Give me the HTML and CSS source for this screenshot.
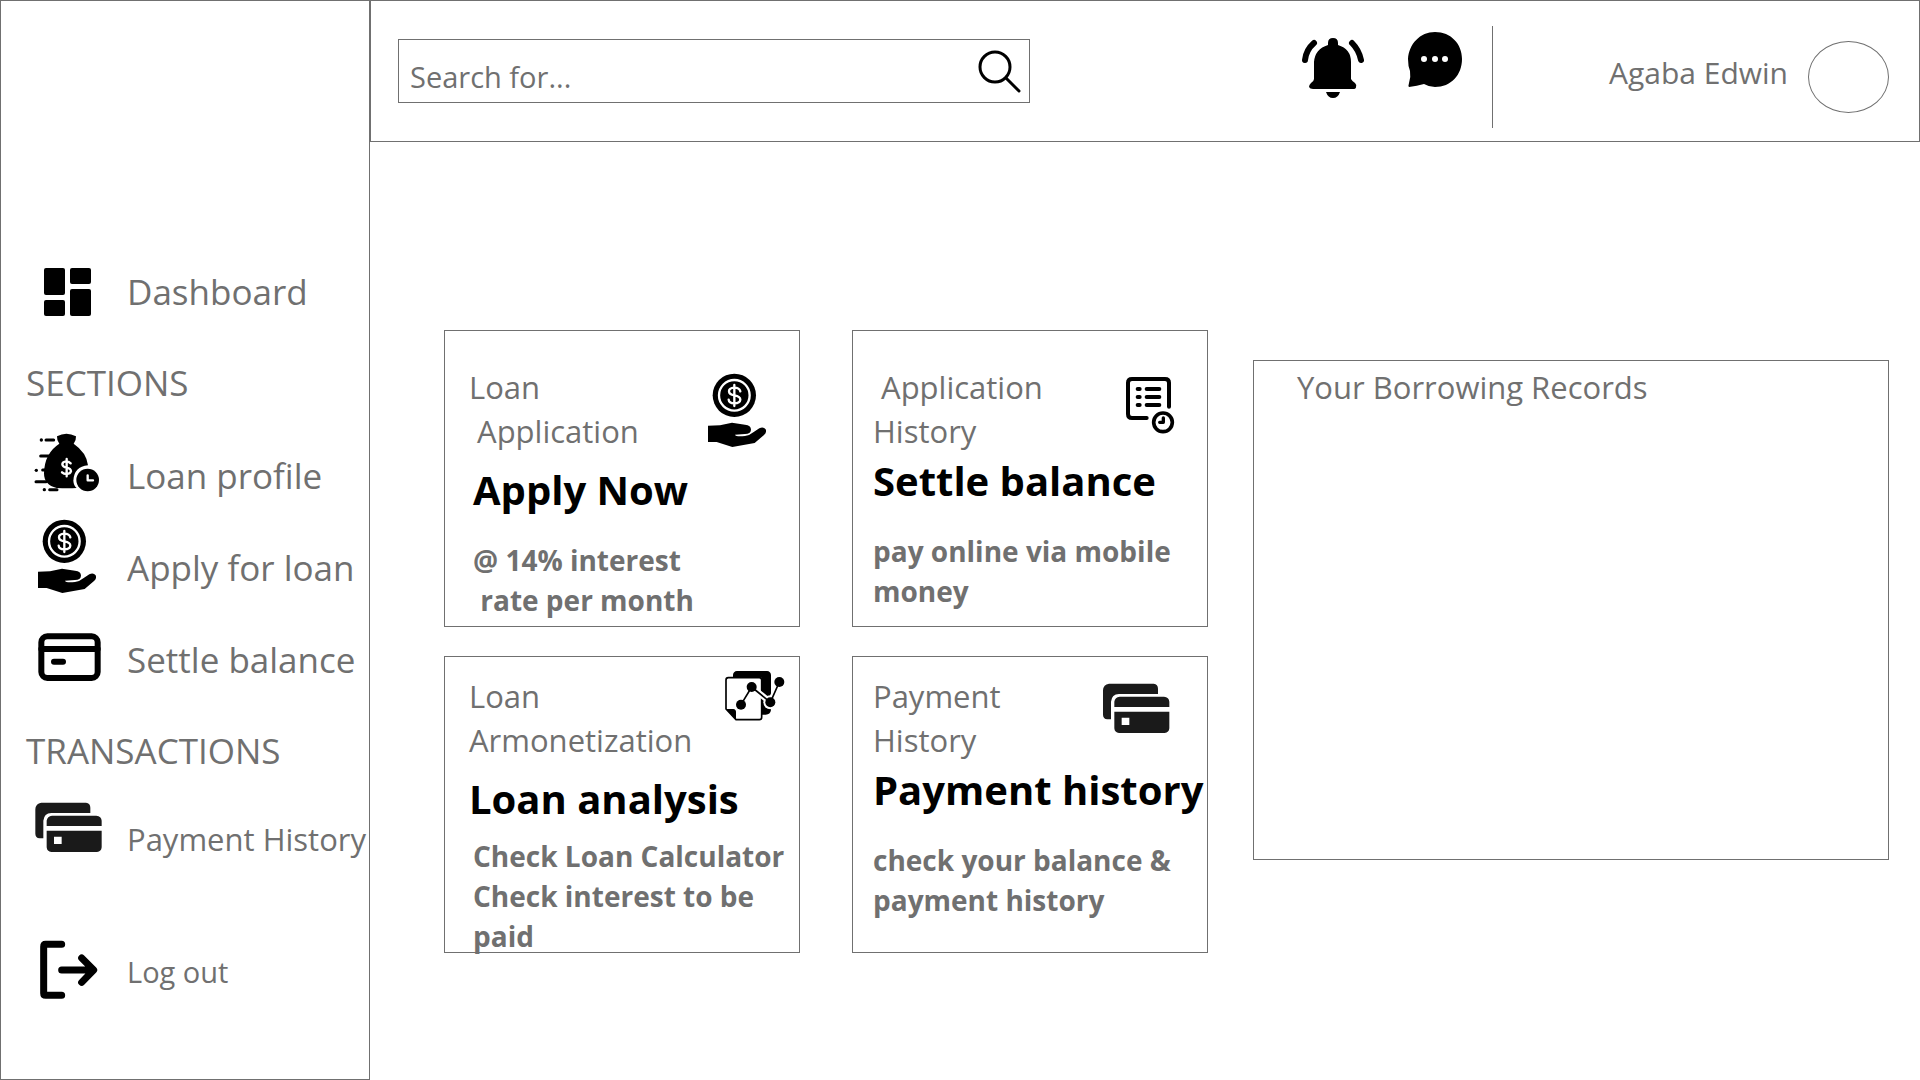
FILE: index.html
```
<!DOCTYPE html>
<html lang="en">
<head>
<meta charset="utf-8">
<title>Loan dashboard</title>
<link rel="stylesheet" href="styles.css">
</head>
<body>
<div class="app">
  <nav class="sidebar" aria-label="Main">
    <a class="nav-item" href="#dashboard">
      <svg class="nav-icon" viewBox="0 0 92 92" aria-hidden="true"><rect x="20" y="23" width="21" height="27" rx="2"/><rect x="20" y="55" width="21" height="16" rx="2"/><rect x="46" y="23" width="21" height="16" rx="2"/><rect x="46" y="44" width="21" height="27" rx="2"/></svg>
      <span>Dashboard</span>
    </a>
    <h2 class="nav-heading">SECTIONS</h2>
    <a class="nav-item" href="#profile">
      <svg class="nav-icon" viewBox="72 567 276 276" aria-hidden="true">
        <path d="M171 589Q199 573 228 589Q229 600 221 611Q260 638 264 676Q222 680 220 722Q221 737 230 744Q205 746 170 744Q132 735 132 700Q133 640 178 611Q170 600 171 589Z"/>
        <circle cx="263" cy="720" r="34"/>
        <path class="line line-white" stroke-width="7" d="M263 706V721H279"/>
        <path class="line line-white" stroke-width="7" d="M212 670Q206 664 199 664Q187 665 187 673Q188 681 200 683Q213 686 213 694Q211 702 200 702Q191 702 186 697M200 657V709"/>
        <path class="line" stroke-width="9" d="M138 600H161M122 648H150M128 690H140M108 725H138M149 749H171"/>
        <g><circle cx="124" cy="600" r="5"/><circle cx="109" cy="691" r="5"/><circle cx="133" cy="749" r="5"/></g>
      </svg>
      <span>Loan profile</span>
    </a>
    <a class="nav-item" href="#apply">
      <svg class="nav-icon" viewBox="72 63 276 276" aria-hidden="true">
        <g id="coin-hand">
          <circle cx="193" cy="124" r="65"/>
          <circle class="line line-white" cx="193" cy="124" r="46" stroke-width="7"/>
          <path class="line line-white" stroke-width="7" d="M211 112Q208 101 193 101Q177 102 177 112Q177 122 193 124Q211 127 211 137Q210 148 193 148Q177 148 176 137M193 93V156"/>
          <path d="M114 215L150 214L186 206L225 212Q243 214 243 227Q242 240 225 240L195 242Q197 249 225 246Q240 244 250 235L268 223Q280 217 287 226Q291 236 282 243L254 267L187 279L140 264H114Z"/>
        </g>
      </svg>
      <span>Apply for loan</span>
    </a>
    <a class="nav-item" href="#settle">
      <svg class="nav-icon" viewBox="72 339 276 276" aria-hidden="true"><rect class="line" x="124" y="409" width="169" height="125" rx="18" stroke-width="18"/><path class="line" stroke-width="18" d="M124 447H293M162 485H189"/></svg>
      <span>Settle balance</span>
    </a>
    <h2 class="nav-heading">TRANSACTIONS</h2>
    <a class="nav-item nav-item-compact" href="#payments">
      <svg class="nav-icon" viewBox="72 99 276 276" aria-hidden="true">
        <g id="card-stack" fill="#1a1a1a">
          <path d="M124 128H258Q271 130 271 143V159H154Q132 160 130 182V235H119Q106 233 106 221V148Q107 130 124 128Z"/>
          <path d="M140 198V182Q142 168 156 167H289Q304 168 305 182V198Z"/>
          <path fill-rule="evenodd" d="M140 212H305V262Q304 275 291 276H154Q141 275 140 262ZM162 230V252H185V230Z"/>
        </g>
      </svg>
      <span>Payment History</span>
    </a>
    <a class="nav-item nav-item-logout" href="#logout">
      <svg class="nav-icon" viewBox="72 495 276 276" aria-hidden="true"><path class="line" stroke-width="21" d="M185 553H137Q131 553 131 560V700Q131 706 137 706H185M185 630H279M245 594L281 630L245 667"/></svg>
      <span>Log out</span>
    </a>
  </nav>

  <div class="page">
    <header class="topbar">
      <form class="search" role="search">
        <input class="search-input" type="text" placeholder="Search for..." aria-label="Search for">
        <button class="icon-button search-button" type="button" aria-label="Search">
          <svg width="44" height="44" viewBox="0 0 44 44"><circle class="line" cx="18" cy="18" r="15" stroke-width="3"/><path class="line" stroke-width="3" d="M29 29L42 42"/></svg>
        </button>
      </form>
      <div class="actions">
        <button class="icon-button" type="button" aria-label="Notifications">
          <svg width="62" height="68" viewBox="0 0 62 68"><path d="M26 13V11Q26 6 31 6Q36 6 36 11V13Q49 17 49 30V47Q50 49 53 51Q55 53 54 55Q54 57 51 57H11Q8 57 7 55Q7 53 9 51Q12 49 12 47V30Q13 17 26 13ZM24 60H38Q36 66 31 66Q26 66 24 60Z"/><path class="line" stroke-width="6" d="M12 11Q4 18 3 28M50 11Q57 18 59 28"/></svg>
        </button>
        <button class="icon-button" type="button" aria-label="Messages">
          <svg width="54" height="56" viewBox="0 0 54 56"><path d="M27 0C43 0 54 12 54 27C54 43 43 55 27 55Q21 55 16 52Q9 54 1 55Q0 54 1 51Q3 45 2 39Q0 34 0 27C1 12 12 0 27 0Z"/><g fill="#fff"><circle cx="16" cy="27" r="3"/><circle cx="27" cy="27" r="3"/><circle cx="37" cy="27" r="3"/></g></svg>
        </button>
      </div>
      <div class="user">
        <span class="user-name">Agaba Edwin</span>
        <span class="avatar"></span>
      </div>
    </header>

    <main class="content">
      <div class="cards">
        <section class="card card-apply">
          <div class="card-head">
            <p class="card-label">Loan
 Application</p>
            <svg class="card-icon" viewBox="792 135 264 264" aria-hidden="true"><use href="#coin-hand" transform="translate(690 102)"/></svg>
          </div>
          <h3 class="card-title">Apply Now</h3>
          <p class="card-note">@ 14% interest
 rate per month</p>
        </section>
        <section class="card card-right">
          <div class="card-head">
            <p class="card-label"> Application
History</p>
            <svg class="card-icon" viewBox="816 135 264 264" aria-hidden="true">
              <path class="line" stroke-width="12" d="M920 294H876Q864 294 864 282V188Q864 177 876 177H975Q987 177 987 188V260"/>
              <path class="line" stroke-width="12" d="M893 207H899M920 207H958M893 231H899M920 231H958M893 255H899M920 255H958"/>
              <circle class="line" cx="969" cy="307" r="28" stroke-width="11"/>
              <path class="line" stroke-width="10" d="M970 294V307H959"/>
            </svg>
          </div>
          <h3 class="card-title">Settle balance</h3>
          <p class="card-note">pay online via mobile
money</p>
        </section>
        <section class="card card-low card-tight">
          <div class="card-head">
            <p class="card-label">Loan
Armonetization</p>
            <svg class="card-icon" viewBox="792 102 264 264" aria-hidden="true">
              <path d="M879 113V105Q880 94 891 93H981Q992 94 993 105V210Q991 224 977 224H965V113Z"/>
              <path fill="#fff" stroke="#000" stroke-width="5" stroke-linejoin="round" d="M858 207V120Q858 113 865 113H958Q965 113 965 120V232Q965 239 958 239H888Z"/>
              <path d="M858 207H880Q888 208 888 216V239Z"/>
              <path class="line line-white" stroke-width="18" d="M935 141L991 187L1018 126"/><circle cx="991" cy="187" r="21" fill="#fff"/>
              <path class="line" stroke-width="5" d="M903 194L935 141L991 187L1018 126"/>
              <circle cx="903" cy="194" r="15"/><circle cx="935" cy="141" r="15"/><circle cx="991" cy="187" r="15"/><circle cx="1018" cy="126" r="15"/>
            </svg>
          </div>
          <h3 class="card-title">Loan analysis</h3>
          <p class="card-note">Check Loan Calculator
Check interest to be
paid</p>
        </section>
        <section class="card card-right card-low">
          <div class="card-head">
            <p class="card-label">Payment
History</p>
            <svg class="card-icon" viewBox="816 102 264 264" aria-hidden="true"><use href="#card-stack" transform="translate(683 3)"/></svg>
          </div>
          <h3 class="card-title">Payment history</h3>
          <p class="card-note">check your balance &amp;
payment history</p>
        </section>
      </div>
      <section class="records">
        <h2 class="records-title">Your Borrowing Records</h2>
      </section>
    </main>
  </div>
</div>
</body>
</html>
```
FILE: styles.css
```
* {
  box-sizing: border-box;
}

body {
  margin: 0;
  background: #fff;
  color: #707070;
  font-family: "Open Sans", "Noto Sans", sans-serif;
  font-size: 29px;
}

h2,
h3,
p {
  margin: 0;
  font-weight: 400;
}

svg {
  display: block;
  overflow: visible;
  fill: #000;
}

.line {
  fill: none;
  stroke: #000;
  stroke-linecap: round;
  stroke-linejoin: round;
}

.line-white {
  stroke: #fff;
}

.app {
  display: grid;
  grid-template-columns: 370px minmax(0, 1fr);
  min-height: 100vh;
}

/* Sidebar */

.sidebar {
  padding: 244px 0 62px 23px;
  border: 1px solid #707070;
}

.nav-item {
  display: flex;
  align-items: center;
  gap: 11px;
  height: 92px;
  color: inherit;
  font-size: 35px;
  text-decoration: none;
  white-space: nowrap;
}

.nav-icon {
  flex: none;
  width: 92px;
  height: 92px;
}

.nav-item-compact {
  height: 84px;
  font-size: 31px;
}

.nav-item-logout {
  margin-top: 44px;
  font-size: 29px;
}

.nav-heading {
  padding-left: 2px;
  font-size: 35px;
  line-height: 92px;
}

/* Top bar */

.topbar {
  display: flex;
  align-items: flex-start;
  height: 142px;
  padding: 0 30px 0 27px;
  border: 1px solid #707070;
}

.search {
  display: flex;
  flex: 0 1 632px;
  align-items: center;
  height: 64px;
  margin-top: 38px;
  padding-right: 8px;
  border: 1px solid #707070;
}

.search-input {
  flex: 1;
  min-width: 0;
  height: 62px;
  padding: 11px 0 0 11px;
  border: 0;
  outline: 0;
  background: transparent;
  color: inherit;
  font: inherit;
}

.search-input::placeholder {
  color: #707070;
  opacity: 1;
}

.icon-button {
  flex: none;
  padding: 0;
  border: 0;
  background: none;
  cursor: pointer;
}

.actions {
  display: flex;
  align-items: flex-start;
  gap: 44px;
  margin: 31px 30px 0 auto;
}

.user {
  display: flex;
  align-items: center;
  justify-content: flex-end;
  gap: 20px;
  width: 397px;
  height: 102px;
  margin-top: 25px;
  border-left: 1px solid #707070;
}

.user-name {
  padding-bottom: 8px;
  font-size: 30px;
  line-height: 40px;
  white-space: nowrap;
}

.avatar {
  width: 81px;
  height: 72px;
  border: 1px solid #707070;
  border-radius: 50%;
}

/* Content */

.content {
  display: grid;
  grid-template-columns: 764fr 636fr;
  align-items: start;
  gap: 45px;
  padding: 188px 31px 60px 74px;
}

.cards {
  display: grid;
  grid-template-columns: repeat(2, minmax(0, 1fr));
  gap: 29px 52px;
}

.card {
  height: 297px;
  padding: 34px 0 0 24px;
  border: 1px solid #707070;
}

.card-right {
  padding-left: 20px;
}

.card-low {
  padding-top: 17px;
}

.card-head {
  display: flex;
  justify-content: space-between;
  padding-right: 7px;
}

.card-label {
  font-size: 31px;
  line-height: 44px;
  white-space: pre;
}

.card-icon {
  flex: none;
  width: 88px;
  height: 88px;
}

.card-title {
  margin-top: 11px;
  color: #000;
  font-size: 40px;
  font-weight: 700;
  line-height: 52px;
  white-space: nowrap;
}

.card-apply .card-title {
  padding-left: 4px;
}

.card-right .card-title {
  margin-top: 2px;
}

.card-note {
  margin-top: 24px;
  padding-left: 4px;
  font-size: 28px;
  font-weight: 700;
  line-height: 40px;
  white-space: pre;
}

.card-right .card-note {
  padding-left: 0;
}

.card-tight .card-note {
  margin-top: 11px;
}

.records {
  min-height: 500px;
  margin-top: 30px;
  padding: 4px 24px 24px 43px;
  border: 1px solid #707070;
}

.records-title {
  font-size: 31px;
  line-height: 44px;
}
```
